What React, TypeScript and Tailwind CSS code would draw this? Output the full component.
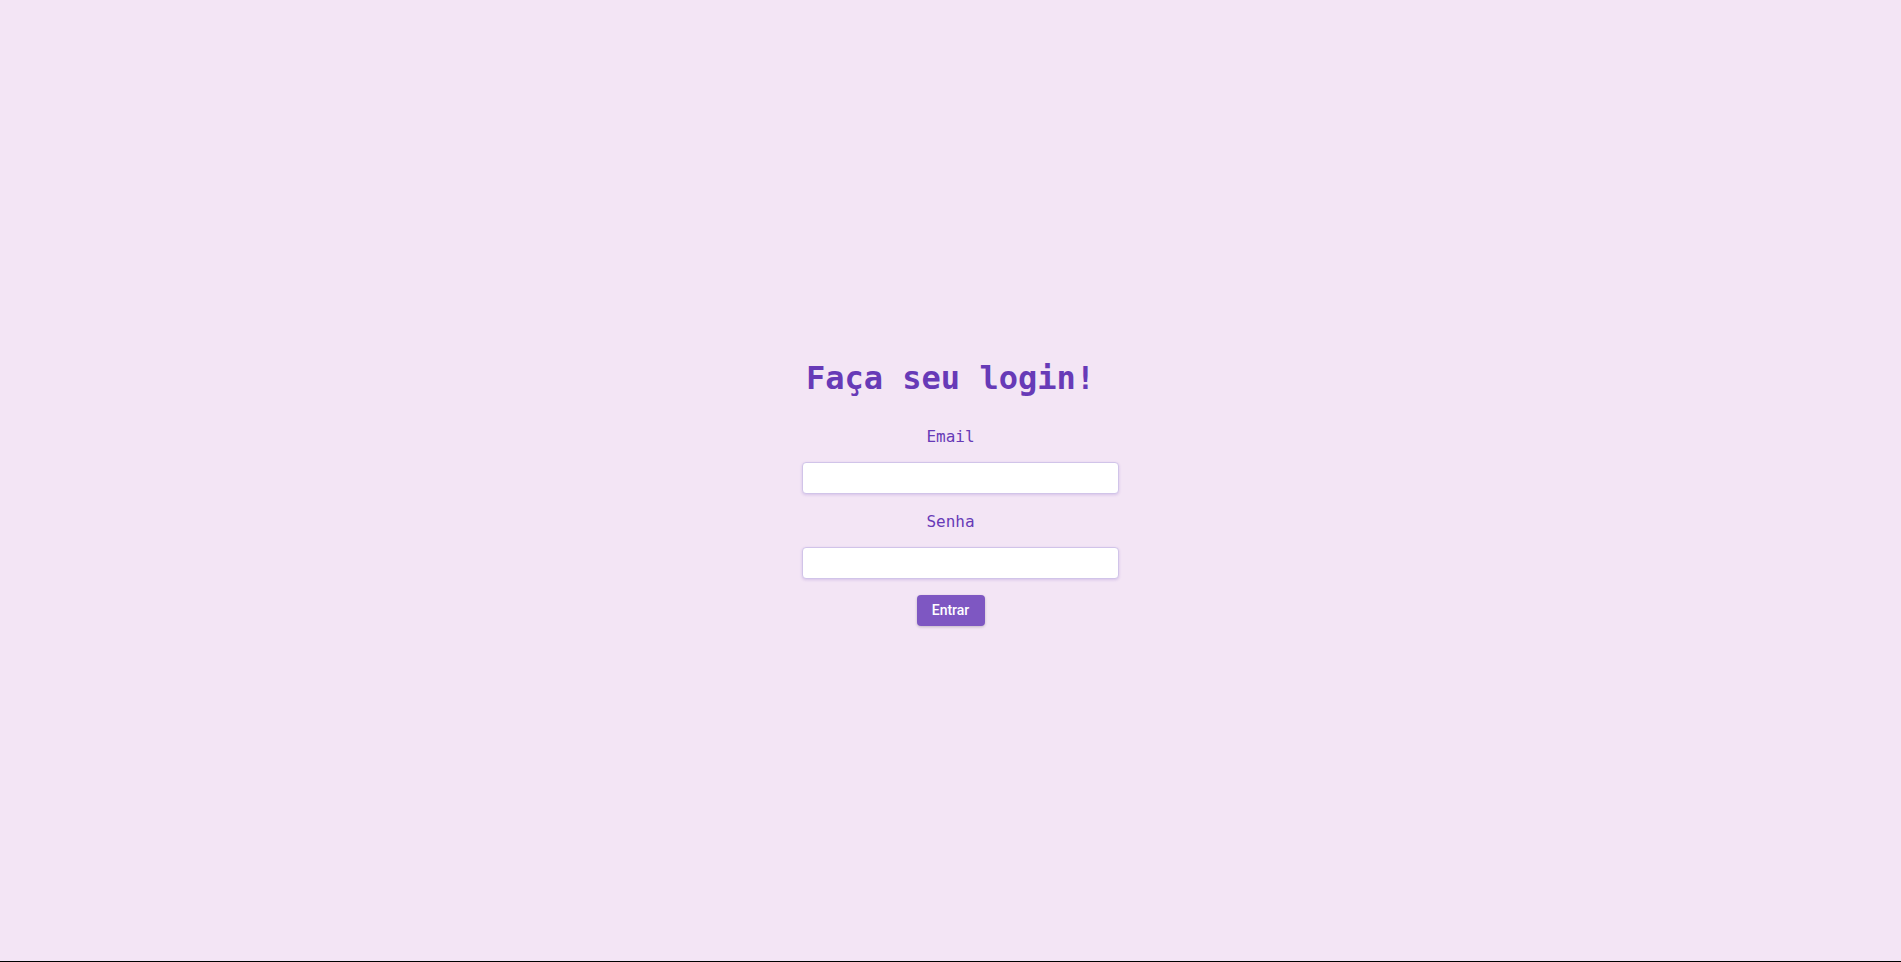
import React from "react";

export default function App() {
  return (
    <div className="h-[962px] w-full bg-black">
      <div className="flex h-[961px] w-full flex-col items-center justify-center bg-[#f3e5f5] pt-6">
        <h1
          className="text-[32px] leading-[38px] font-bold text-[#673ab7]"
          style={{ fontFamily: '"DejaVu Sans Mono", "Liberation Mono", monospace' }}
        >
          Faça seu login!
        </h1>
        <form className="mt-7 flex flex-col items-center" onSubmit={(e) => e.preventDefault()}>
          <label
            className="text-[16px] leading-6 text-[#673ab7]"
            style={{ fontFamily: '"DejaVu Sans Mono", "Liberation Mono", monospace' }}
          >
            Email
          </label>
          <input
            type="email"
            className="ml-5 mt-[13px] h-8 w-[317px] rounded border border-[#d1c4e9] bg-white shadow-[0_1px_3px_rgba(103,58,183,0.2)] outline-none"
          />
          <label
            className="mt-4 text-[16px] leading-6 text-[#673ab7]"
            style={{ fontFamily: '"DejaVu Sans Mono", "Liberation Mono", monospace' }}
          >
            Senha
          </label>
          <input
            type="password"
            className="ml-5 mt-[13px] h-8 w-[317px] rounded border border-[#d1c4e9] bg-white shadow-[0_1px_3px_rgba(103,58,183,0.2)] outline-none"
          />
          <button
            type="submit"
            className="mt-4 h-[31px] w-[68px] rounded bg-[#7e57c2] text-[14px] font-medium text-white shadow-[0_1px_3px_rgba(0,0,0,0.2)]"
            style={{ fontFamily: 'Roboto, "Liberation Sans", Arial, sans-serif' }}
          >
            Entrar
          </button>
        </form>
      </div>
    </div>
  );
}
